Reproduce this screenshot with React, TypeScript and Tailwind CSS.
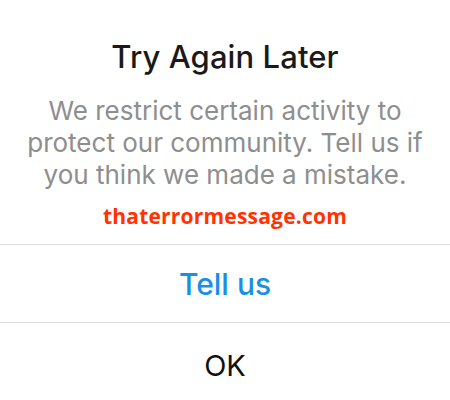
import React from "react";

export default function App() {
  return (
    <div className="w-[450px] h-[400px] overflow-hidden bg-white flex flex-col items-stretch" style={{ fontFamily: "Inter, 'Liberation Sans', sans-serif" }}>
      <div className="flex flex-col items-center pt-[38px]">
        <h1 className="text-[31px] leading-[38px] font-medium text-[#1a1a1a] tracking-[0.1px]">Try Again Later</h1>
        <p className="mt-[19px] text-[26px] leading-[32px] text-[#8e8e8e] text-center px-[20px]">
          We restrict certain activity to protect our community. Tell us if you think we made a mistake.
        </p>
        <div className="mt-[11px] text-[21px] leading-[28px] font-bold text-[#ff3300] tracking-[0.2px]" style={{ fontFamily: "'Open Sans', sans-serif" }}>thaterrormessage.com</div>
      </div>
      <div className="mt-[14px] border-t border-[#dbdbdb] h-[84px] flex items-center justify-center">
        <span className="text-[30px] font-medium text-[#1a8fe8] pt-[2px]">Tell us</span>
      </div>
      <div className="border-t border-[#dbdbdb] h-[83px] flex items-center justify-center">
        <span className="text-[29px] text-[#111] pt-[8px]">OK</span>
      </div>
    </div>
  );
}
